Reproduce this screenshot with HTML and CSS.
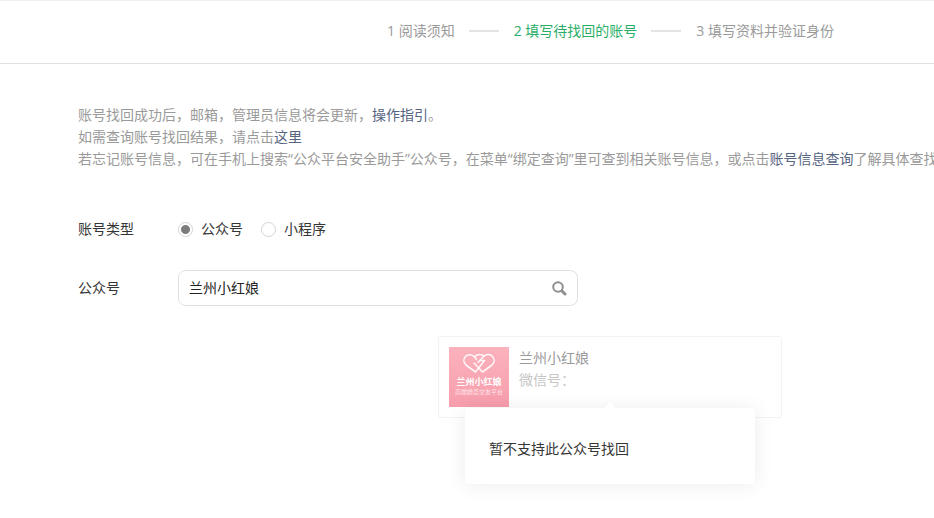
FILE: index.html
```html
<!DOCTYPE html>
<html lang="zh-CN">
<head>
    <meta charset="UTF-8">
    <meta name="viewport" content="width=device-width, initial-scale=1.0">
    <title>账号找回</title>
    <link rel="stylesheet" href="styles.css">
</head>
<body>
    <ol class="steps">
        <li class="step">1 阅读须知</li>
        <li class="step current">2 填写待找回的账号</li>
        <li class="step">3 填写资料并验证身份</li>
    </ol>

    <main class="content">
        <div class="intro">
            <p>账号找回成功后，邮箱，管理员信息将会更新，<a href="#">操作指引</a>。</p>
            <p>如需查询账号找回结果，请点击<a href="#">这里</a></p>
            <p>若忘记账号信息，可在手机上搜索“公众平台安全助手”公众号，在菜单“绑定查询”里可查到相关账号信息，或点击<a href="#">账号信息查询</a>了解具体查找</p>
        </div>

        <form class="form">
            <div class="form-group" role="radiogroup" aria-labelledby="typeLabel">
                <span class="form-label" id="typeLabel">账号类型</span>
                <div class="radios">
                    <label class="radio"><input type="radio" name="type" checked>公众号</label>
                    <label class="radio"><input type="radio" name="type">小程序</label>
                </div>
            </div>
            <div class="form-group">
                <label class="form-label" for="account">公众号</label>
                <div class="search">
                    <input type="text" id="account" name="account" value="兰州小红娘">
                    <button type="button" class="search-btn" aria-label="搜索">
                        <svg width="16" height="16" viewBox="0 0 16 16" fill="none" stroke="#8f8f8f">
                            <circle cx="7" cy="7" r="4.8" stroke-width="2"/>
                            <path d="M11.200 11.200L14 14" stroke-width="3" stroke-linecap="round"/>
                        </svg>
                    </button>
                </div>
            </div>
        </form>

        <div class="result">
            <div class="account">
                <svg class="avatar" width="60" height="60" viewBox="0 0 60 60">
                    <defs>
                        <linearGradient id="pink" x1="0" y1="0" x2="0" y2="1">
                            <stop offset="0" stop-color="#fbb2bc"/>
                            <stop offset="1" stop-color="#f79dac"/>
                        </linearGradient>
                    </defs>
                    <rect width="60" height="60" fill="url(#pink)"/>
                    <g fill="none" stroke="#fff" stroke-opacity="0.9" stroke-width="1.6" stroke-linejoin="round" stroke-linecap="round">
                        <path d="M35 9C32 7 28 7 25.500 10C23 7 18.500 7 16.500 9.500C14 12 14.500 15.500 17 18L26.500 25L35.500 13.500H31"/>
                        <path d="M25.500 10L27.500 12.500M25 16L33.500 25L43 18C45.500 15.500 46 12 43.500 9.500C41.500 7 37 7 35 9L29 15.500"/>
                    </g>
                    <text class="logo-name" x="30" y="38" text-anchor="middle">兰州小红娘</text>
                    <text class="logo-slogan" x="30" y="47" text-anchor="middle">高端婚恋交友平台</text>
                </svg>
                <div class="account-info">
                    <strong class="account-name">兰州小红娘</strong>
                    <span class="account-id">微信号：</span>
                </div>
            </div>
            <div class="popover" role="alert">暂不支持此公众号找回</div>
        </div>
    </main>
</body>
</html>
```

FILE: styles.css
```css
* {
    box-sizing: border-box;
}
body {
    margin: 0;
    font-family: "Open Sans", "Noto Sans CJK SC", sans-serif;
    font-size: 14px;
    line-height: 22px;
    color: #353535;
    background-color: #fff;
}
a {
    color: #56647f;
    text-decoration: none;
}
p {
    margin: 0;
}

/* 步骤条 */
.steps {
    display: flex;
    justify-content: flex-end;
    margin: 0;
    padding: 19px 100px 21px;
    list-style: none;
    color: #9a9a9a;
    border-top: 1px solid #f0f0f0;
    border-bottom: 1px solid #e0e0e0;
}
.step {
    display: flex;
    align-items: center;
}
.step + .step::before {
    content: "";
    width: 30px;
    height: 2px;
    margin: 0 15px 0 14px;
    background-color: #e4e4e4;
}
.step.current {
    color: #2aae67;
}

.content {
    padding: 40px 0 96px 78px;
}
.intro {
    color: #9a9a9a;
    white-space: nowrap;
    overflow: hidden;
}

/* 表单 */
.form {
    margin-top: 48px;
}
.form-group {
    display: flex;
    align-items: center;
    margin-bottom: 30px;
}
.form-label {
    width: 100px;
}
.radios {
    display: flex;
    gap: 18px;
}
.radio {
    display: flex;
    align-items: center;
    gap: 8px;
}
.radio input {
    appearance: none;
    width: 15px;
    height: 15px;
    margin: 0;
    border: 1px solid #d4d4d4;
    border-radius: 50%;
    background-color: #fff;
}
.radio input:checked {
    background-image: radial-gradient(circle, #7c7c7c 4px, transparent 5px);
}
.search {
    display: flex;
    align-items: center;
    width: 400px;
    height: 36px;
    padding: 0 10px;
    border: 1px solid #e0e0e0;
    border-radius: 8px;
}
.search input {
    flex: 1;
    min-width: 0;
    padding: 0;
    border: none;
    outline: none;
    font: inherit;
    color: #222;
    background: none;
}
.search-btn {
    display: flex;
    padding: 0;
    border: none;
    background: none;
    cursor: pointer;
}

/* 搜索结果 */
.result {
    position: relative;
    width: 344px;
    margin-left: 360px;
}
.account {
    display: flex;
    gap: 10px;
    padding: 10px;
    border: 1px solid #f2f2f2;
    border-radius: 3px;
}
.account-info {
    display: flex;
    flex-direction: column;
}
.account-name {
    font-weight: normal;
    color: #9a9a9a;
}
.account-id {
    color: #c6c6c6;
}
.logo-name {
    font-size: 9px;
    font-weight: bold;
    fill: #fff;
}
.logo-slogan {
    font-size: 6px;
    fill: #ffe4e8;
}
.popover {
    position: absolute;
    top: 72px;
    left: 27px;
    width: 290px;
    padding: 30px 24px 24px;
    border-radius: 4px;
    background-color: #fff;
    box-shadow: 0 1px 20px rgba(0, 0, 0, 0.08);
}
.popover::before {
    content: "";
    position: absolute;
    top: -6px;
    left: 50%;
    margin-left: -6px;
    border: 6px solid transparent;
    border-top: none;
    border-bottom-color: #fff;
}
```
